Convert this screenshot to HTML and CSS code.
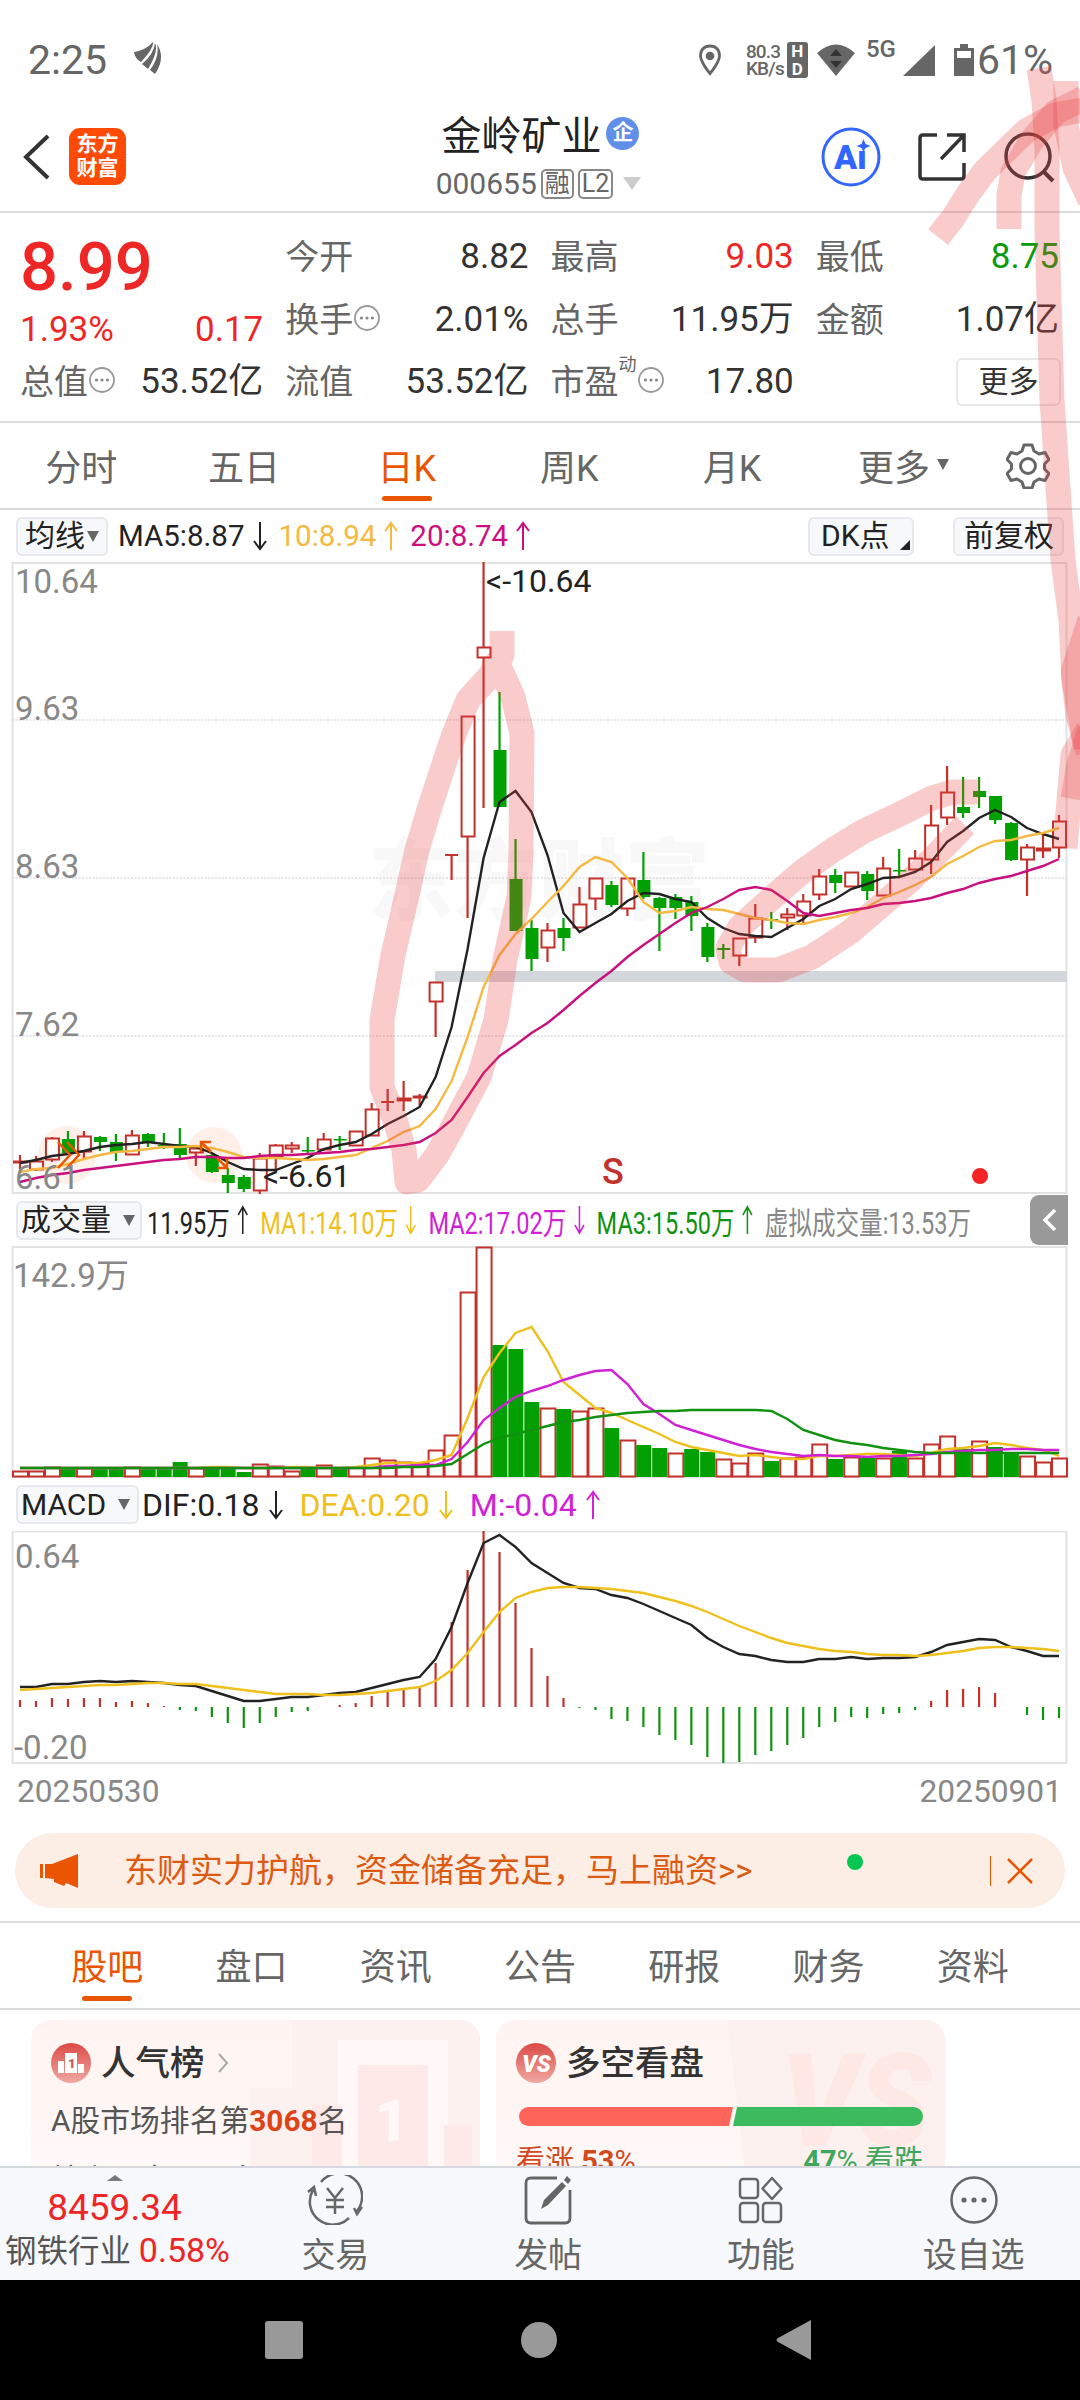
FILE: index.html
```html
<!DOCTYPE html>
<html lang="zh-CN">
<head>
    <meta charset="UTF-8">
    <meta name="viewport" content="width=device-width, initial-scale=1.0">
    <title>金岭矿业 000655</title>
    <link rel="stylesheet" href="styles.css">
</head>
<body>
    <!-- shared icons -->
    <svg class="defs" width="0" height="0">
        <symbol id="up" viewBox="0 0 14 30"><path d="M7 29V2M1 10L7 2l6 8" fill="none" stroke="currentColor" stroke-width="2"/></symbol>
        <symbol id="down" viewBox="0 0 14 30"><path d="M7 1v27M1 20l6 8 6-8" fill="none" stroke="currentColor" stroke-width="2"/></symbol>
        <symbol id="dots" viewBox="0 0 28 28"><circle cx="14" cy="14" r="12" fill="none" stroke="#999" stroke-width="1.8"/><g fill="#888"><circle cx="8.5" cy="14" r="1.6"/><circle cx="14" cy="14" r="1.6"/><circle cx="19.5" cy="14" r="1.6"/></g></symbol>
    </svg>

    <div class="screen">
        <div class="status-bar">
            <span class="clock">2:25</span>
            <svg class="leaf" width="28" height="32" viewBox="0 0 28 32"><path d="M0 10Q12 8 19 0Q20 6 7 20Q1 17 0 10zM8 22Q20 12 21 1Q25 9 14 27zM16 28Q26 14 23 2Q32 16 21 32z" fill="#666"/></svg>
            <div class="status-right">
                <svg class="pin" width="24" height="32" viewBox="0 0 24 32"><path d="M12 2C6 2 2.500 6 2.500 11.500c0 7 9.500 18 9.500 18s9.500-11 9.500-18C21.500 6 18 2 12 2z" fill="none" stroke="#666" stroke-width="2.800"/><circle cx="12" cy="12" r="4.300" fill="#666"/></svg>
                <span class="speed">80.3<br>KB/s</span>
                <span class="hd"><b>H</b><b>D</b></span>
                <svg class="wifi" width="38" height="32" viewBox="0 0 38 32"><path d="M0 9Q19-8 38 9L19 32z" fill="#666"/><path d="M13 12l6-7 6 7zM13 17h12l-6 7z" fill="#333"/></svg>
                <span class="net">5G</span>
                <svg class="signal" width="32" height="31" viewBox="0 0 32 31"><path d="M32 0v31H0z" fill="#666"/></svg>
                <svg class="battery" width="20" height="32" viewBox="0 0 20 32"><path d="M6 0h8v4h6v28H0V4h6z" fill="#666"/><path d="M3 7h14v7H3z" fill="#fff"/></svg>
                <span class="clock">61%</span>
            </div>
        </div>

        <div class="header">
            <div class="header-left">
                <svg width="28" height="46" viewBox="0 0 28 46"><path d="M26 2L4 23l22 21" fill="none" stroke="#333" stroke-width="4"/></svg>
                <div class="logo">东方<br>财富</div>
            </div>
            <div class="stock">
                <div class="stock-name">金岭矿业<span class="badge">企</span></div>
                <div class="stock-code">000655<span class="tag">融</span><span class="tag">L2</span><i class="tri-light"></i></div>
            </div>
            <div class="header-right">
                <svg width="60" height="60" viewBox="0 0 60 60"><circle cx="30" cy="30" r="28" fill="none" stroke="#3366ff" stroke-width="3"/><text x="13" y="42" class="ai">Ai</text><circle cx="42" cy="17" r="6" fill="#fff"/><path d="M42.500 12l2 5 5 2-5 2-2 4-2-4-5-2 5-2z" fill="#3366ff"/></svg>
                <svg width="50" height="50" viewBox="0 0 50 50"><path d="M20 3H6Q3 3 3 6v38q0 3 3 3h38q3 0 3-3V31M30 3h17v17M47 3L24 27" fill="none" stroke="#333" stroke-width="3.500"/></svg>
                <svg width="52" height="52" viewBox="0 0 52 52"><circle cx="25" cy="25" r="22" fill="none" stroke="#333" stroke-width="3.500"/><path d="M40 40l10 10" stroke="#333" stroke-width="4"/></svg>
            </div>
        </div>

        <div class="quote">
            <div class="col">
                <div class="price red">8.99</div>
                <div class="cell cell-short red"><span>1.93%</span><span>0.17</span></div>
                <div class="cell"><label>总值<svg class="info"><use href="#dots"/></svg></label><span>53.52亿</span></div>
            </div>
            <div class="col">
                <div class="cell"><label>今开</label><span>8.82</span></div>
                <div class="cell"><label>换手<svg class="info"><use href="#dots"/></svg></label><span>2.01%</span></div>
                <div class="cell"><label>流值</label><span>53.52亿</span></div>
            </div>
            <div class="col">
                <div class="cell"><label>最高</label><span class="red">9.03</span></div>
                <div class="cell"><label>总手</label><span>11.95万</span></div>
                <div class="cell"><label>市盈<sup>动</sup><svg class="info"><use href="#dots"/></svg></label><span>17.80</span></div>
            </div>
            <div class="col">
                <div class="cell"><label>最低</label><span class="green">8.75</span></div>
                <div class="cell"><label>金额</label><span>1.07亿</span></div>
                <div class="cell cell-end"><button class="more">更多</button></div>
            </div>
        </div>

        <div class="period">
            <span>分时</span><span>五日</span><span class="active">日K</span><span>周K</span><span>月K</span><span class="period-more">更多<i class="tri"></i></span>
            <svg class="gear" width="44" height="46" viewBox="0 0 44 46"><path d="M18 2h8l2 6 5 3 6-1.500 4 7-4.500 4.500v5l4.500 4.500-4 7-6-1.500-5 3-2 6h-8l-2-6-5-3-6 1.500-4-7L5.500 26v-5L1 16.500l4-7L11 11l5-3z" fill="none" stroke="#666" stroke-width="3" stroke-linejoin="round"/><circle cx="22" cy="23" r="7.500" fill="none" stroke="#666" stroke-width="3"/></svg>
        </div>

        <div class="ma-row">
            <span class="chip chip-ma">均线<i class="tri"></i></span>
            <span class="ind">MA5:8.87<svg class="arrow"><use href="#down"/></svg></span>
            <span class="ind c-ma10">10:8.94<svg class="arrow"><use href="#up"/></svg></span>
            <span class="ind c-ma20">20:8.74<svg class="arrow"><use href="#up"/></svg></span>
            <span class="chip chip-dk">DK点<i class="corner"></i></span>
            <span class="chip chip-fq">前复权</span>
        </div>
        <svg class="chart" id="kline" width="1080" height="632" viewBox="0 562 1080 632"></svg>

        <div class="vol-row">
            <span class="chip chip-vol">成交量<i class="tri"></i></span>
            <div class="squeeze">
                <span>11.95万<svg class="arrow"><use href="#up"/></svg></span>
                <span class="c-yellow">MA1:14.10万<svg class="arrow"><use href="#down"/></svg></span>
                <span class="c-purple">MA2:17.02万<svg class="arrow"><use href="#down"/></svg></span>
                <span class="c-green">MA3:15.50万<svg class="arrow"><use href="#up"/></svg></span>
                <span class="c-grey">虚拟成交量:13.53万</span>
            </div>
            <span class="slide"><svg width="16" height="26" viewBox="0 0 16 26"><path d="M14 3L4 13l10 10" fill="none" stroke="#fff" stroke-width="3.500"/></svg></span>
        </div>
        <svg class="chart" id="volume" width="1080" height="232" viewBox="0 1246 1080 232"></svg>

        <div class="macd-row">
            <span class="chip chip-macd">MACD<i class="tri"></i></span>
            <span class="ind">DIF:0.18<svg class="arrow"><use href="#down"/></svg></span>
            <span class="ind c-yellow">DEA:0.20<svg class="arrow"><use href="#down"/></svg></span>
            <span class="ind c-purple">M:-0.04<svg class="arrow"><use href="#up"/></svg></span>
        </div>
        <svg class="chart" id="macd" width="1080" height="233" viewBox="0 1531 1080 233"></svg>
        <div class="dates"><span>20250530</span><span>20250901</span></div>

        <div class="banner">
            <svg class="horn" width="39" height="34" viewBox="0 0 39 34"><path d="M0 10h3v14H0zM5 10h7L38 0v34l-12-5-2 3-10-4v-3l-9-1z" fill="#ea5504"/></svg>
            <span class="banner-text">东财实力护航，资金储备充足，马上融资&gt;&gt;</span>
            <i class="dot"></i>
            <i class="bar"></i>
            <svg width="26" height="26" viewBox="0 0 26 26"><path d="M1 1l24 24M25 1L1 25" stroke="#ea5504" stroke-width="2.500"/></svg>
        </div>

        <div class="tabs">
            <span class="active">股吧</span><span>盘口</span><span>资讯</span><span>公告</span><span>研报</span><span>财务</span><span>资料</span>
        </div>

        <div class="cards">
            <div class="card">
                <svg class="card-bg" width="260" height="150" viewBox="0 0 260 150"><path d="M72 0h188v150H30V68h42z" fill="#fdf1f0"/><path d="M118 20h110v130H118z" fill="#fff8f6"/><path d="M138 45h70v105h-70zM92 85h30v65H92zM224 105h28v45h-28z" fill="#fde9e7"/><text x="154" y="121" class="bg-num">1</text></svg>
                <div class="card-title">
                    <svg width="40" height="40" viewBox="0 0 40 40"><circle cx="20" cy="20" r="20" fill="url(#badgeRed)"/><path d="M7 18h6v12H7zM14 10h12v20H14zM27 21h6v9h-6z" fill="#fff"/><text x="17" y="25" class="rank-num">1</text></svg>
                    人气榜
                    <svg class="chev" width="12" height="20" viewBox="0 0 12 20"><path d="M2 1l8 9-8 9" fill="none" stroke="#aaa" stroke-width="2"/></svg>
                </div>
                <div class="card-line">A股市场排名第<b>3068</b>名</div>
                <div class="card-line card-line2">较上一交易日名</div>
            </div>
            <div class="card">
                <svg class="card-bg" width="260" height="150" viewBox="0 0 260 150"><path d="M42 0h200q18 0 18 18v132H60z" fill="#fdf1f0"/><text x="96" y="126" class="bg-vs" textLength="150" lengthAdjust="spacingAndGlyphs">VS</text></svg>
                <div class="card-title">
                    <svg width="40" height="40" viewBox="0 0 40 40"><defs><linearGradient id="badgeRed" x1="0" y1="0" x2="0" y2="1"><stop offset="0" stop-color="#dc4a45"/><stop offset="1" stop-color="#f0a8a2"/></linearGradient></defs><circle cx="20" cy="20" r="20" fill="url(#badgeRed)"/><text x="6" y="29" class="vs">VS</text></svg>
                    多空看盘
                </div>
                <svg class="ratio" width="404" height="19" viewBox="0 0 404 19"><path d="M9.500 0H214l-4 19H9.500a9.500 9.500 0 0 1 0-19z" fill="#ff6459"/><path d="M218 0h176.500a9.500 9.500 0 0 1 0 19H214z" fill="#3cba5e"/></svg>
                <div class="votes"><span class="up">看涨 <b>53</b>%</span><span class="down"><b>47</b>% 看跌</span></div>
            </div>
        </div>

        <div class="toolbar">
            <div class="index">
                <i class="caret"></i>
                <span class="index-value">8459.34</span>
                <span class="index-name">钢铁行业 <em>0.58%</em></span>
            </div>
            <div class="tool">
                <svg width="56" height="50" viewBox="0 0 56 50"><g fill="none" stroke="#666" stroke-width="2.500"><path d="M14 7a23 23 0 0 1 36 29M42 43A23 23 0 0 1 6 15M1 17l6-5 2 9M47 33l3 6 5-7M20 13l8 10 8-10M28 23v16M19 25h18M19 32h18"/></g></svg>
                交易
            </div>
            <div class="tool">
                <svg width="50" height="50" viewBox="0 0 50 50"><path d="M34 3H8Q3 3 3 8v35q0 5 5 5h34q5 0 5-5V15" fill="none" stroke="#666" stroke-width="2.800"/><path d="M18 34l3-9L39 7l4 4-18 19zM41 5l3-4 4 4-3 4z" fill="#666"/></svg>
                发帖
            </div>
            <div class="tool">
                <svg width="46" height="50" viewBox="0 0 46 50"><g fill="none" stroke="#666" stroke-width="2.500"><rect x="2" y="4" width="18" height="19" rx="3"/><rect x="2" y="28" width="18" height="19" rx="3"/><rect x="25" y="28" width="18" height="19" rx="3"/><path d="M34 3l9.500 10.500L34 24l-9.500-10.500z" stroke-linejoin="round"/></g></svg>
                功能
            </div>
            <div class="tool">
                <svg width="50" height="50" viewBox="0 0 50 50"><circle cx="25" cy="25" r="22.500" fill="none" stroke="#666" stroke-width="2.500"/><g fill="#666"><circle cx="15" cy="25" r="2.600"/><circle cx="25" cy="25" r="2.600"/><circle cx="35" cy="25" r="2.600"/></g></svg>
                设自选
            </div>
        </div>

        <div class="nav-bar">
            <svg width="38" height="38"><rect width="38" height="38" rx="3" fill="#999"/></svg>
            <svg width="38" height="38"><circle cx="19" cy="19" r="18" fill="#999"/></svg>
            <svg width="38" height="42" viewBox="0 0 38 42"><path d="M36 1v40L3 23q-3-2 0-4z" fill="#999"/></svg>
        </div>

        <!-- hand drawn marker strokes over the page -->
        <svg class="marker" width="1080" height="2400" viewBox="0 0 1080 2400">
            <path d="M502 631V655L489 677L468 700L453 737L443 767L428 813L417 850L407 895L393 955L382 1020V1087L396 1123L404 1150L407 1182L418 1180L437 1155L451 1130L479 1077L496 1020L505 960L519 897L521 853L522 733L513 697L500 668"/>
            <path d="M979 792H953L932 798L898 815L864 831L833 850L802 872L774 896L740 927L728 948L731 962L745 970H778L812 957L850 932L884 903L912 879L943 848L965 825"/>
            <path d="M1039 68L1044 100L1047 150V230L1052 400L1063 560L1071 620L1074 680L1079 707L1086 748"/>
            <path d="M938 237L953 218L968 194L985 171L1026 131L1055 115L1084 110"/>
            <path d="M1009 229V195L1013 172L1032 140L1056 112L1084 98"/>
            <path d="M1066 81V125L1075 168L1090 200"/>
            <path d="M1090 620L1073 672L1078 715L1088 752"/>
            <path d="M1065 848L1069 800L1073 755L1088 730"/>
            <path d="M1073 799L1079 765L1090 730"/>
        </svg>
    </div>
    <script src="chart.js"></script>
</body>
</html>
```

FILE: styles.css
```css
* {
    box-sizing: border-box;
    margin: 0;
    padding: 0;
}
body {
    width: 1080px;
    background: #fff;
    color: #333;
    font-family: Roboto, "Noto Sans CJK SC", sans-serif;
}
svg {
    display: block;
    flex-shrink: 0;
}
i, em {
    font-style: normal;
}
.defs {
    position: absolute;
}
.screen {
    position: relative;
    width: 1080px;
    height: 2400px;
    overflow: hidden;
}
.red {
    color: #ee2626;
}
.green {
    color: #0a9b0a;
}

/* status bar */
.status-bar {
    display: flex;
    align-items: center;
    height: 86px;
    padding: 34px 27px 0 28px;
    color: #666;
}
.clock {
    font-size: 41px;
    line-height: 52px;
}
.leaf {
    margin-left: 27px;
    margin-top: -4px;
}
.status-right {
    display: flex;
    align-items: center;
    margin-left: auto;
}
.speed {
    width: 36px;
    margin-left: 24px;
    font-size: 19px;
    line-height: 17px;
    font-weight: 500;
    letter-spacing: -0.8px;
}
.hd {
    display: flex;
    flex-direction: column;
    align-items: center;
    width: 21px;
    height: 36px;
    margin: 0 9px 0 5px;
    border-radius: 3px;
    background: #666;
    color: #fff;
    font-size: 17px;
    line-height: 18px;
}
.net {
    margin: -22px 0 0 11px;
    font-size: 24px;
    line-height: 30px;
    font-weight: 500;
}
.signal {
    margin: 0 19px 0 7px;
}
.battery {
    margin-right: 3px;
}

/* header */
.header {
    display: flex;
    align-items: center;
    justify-content: space-between;
    height: 127px;
    padding: 16px 25px 0 22px;
    border-bottom: 2px solid #dcdcdc;
}
.header-left, .header-right {
    display: flex;
    align-items: center;
    width: 240px;
}
.header-right {
    justify-content: flex-end;
    gap: 36px;
}
.logo {
    width: 57px;
    height: 57px;
    margin-left: 19px;
    padding-top: 4px;
    border-radius: 11px;
    background: #ff4a05;
    color: #fff;
    font-size: 21px;
    line-height: 24px;
    font-weight: 700;
    text-align: center;
}
.stock {
    margin-top: 1px;
}
.stock-name, .stock-code {
    display: flex;
    align-items: center;
    justify-content: center;
}
.stock-name {
    height: 53px;
    padding-left: 4px;
    font-size: 40px;
    color: #222;
}
.badge {
    width: 33px;
    height: 33px;
    margin-left: 5px;
    border-radius: 50%;
    background: #5f8fe8;
    color: #fff;
    font-size: 21px;
    line-height: 31px;
    font-weight: 700;
    text-align: center;
}
.stock-code {
    height: 48px;
    font-size: 30px;
    color: #666;
}
.tag {
    height: 30px;
    margin-left: 4px;
    padding: 0 2px;
    border: 2px solid #888;
    border-radius: 5px;
    font-size: 25px;
    line-height: 26px;
}
.tri-light {
    margin-left: 10px;
    border: 9px solid transparent;
    border-top: 13px solid #ccc;
    border-bottom: 0;
}
.ai {
    font-size: 34px;
    font-weight: 900;
    fill: #3366ff;
}

/* quote */
.quote {
    display: grid;
    grid-template-columns: repeat(4, 1fr);
    column-gap: 22px;
    height: 210px;
    padding: 13px 21px 0 20px;
    border-bottom: 2px solid #dcdcdc;
}
.price {
    height: 82px;
    font-size: 67px;
    line-height: 82px;
    font-weight: 500;
}
.cell {
    display: flex;
    align-items: center;
    justify-content: space-between;
    height: 62.5px;
    font-size: 35px;
    line-height: 44px;
}
.cell-short {
    height: 43px;
}
.cell-end {
    justify-content: flex-end;
}
.cell label {
    display: flex;
    align-items: center;
    color: #666;
    font-size: 34px;
}
.cell sup {
    margin-top: -34px;
    font-size: 18px;
    line-height: 20px;
}
.info {
    width: 28px;
    height: 28px;
    margin-top: -4px;
}
.more {
    width: 105px;
    height: 48px;
    margin-right: -2px;
    border: 2px solid #e8e8e8;
    border-radius: 6px;
    background: #fff;
    color: #333;
    font-family: inherit;
    font-size: 30px;
    line-height: 40px;
}

/* period tabs */
.period {
    display: flex;
    align-items: center;
    height: 87px;
    border-bottom: 2px solid #dcdcdc;
    color: #666;
    font-size: 36px;
}
.period span {
    display: flex;
    justify-content: center;
    align-items: center;
    width: 162.7px;
    height: 85px;
    padding-bottom: 2px;
}
.period .period-more {
    width: 180px;
}
.period .active, .tabs .active {
    position: relative;
    color: #ea5504;
}
.period .active::after, .tabs .active::after {
    content: "";
    position: absolute;
    left: 50%;
    bottom: 7px;
    width: 50px;
    height: 5px;
    margin-left: -25px;
    border-radius: 3px;
    background: #ea5504;
}
.tri {
    margin-left: 7px;
    border: 6px solid transparent;
    border-top: 11px solid #666;
    border-bottom: 0;
}
.gear {
    margin-left: 13px;
}

/* indicator rows */
.ma-row, .vol-row, .macd-row {
    display: flex;
    align-items: center;
    padding-left: 16px;
}
.ma-row {
    height: 52px;
}
.vol-row {
    height: 52px;
}
.macd-row {
    height: 53px;
}
.chip {
    display: flex;
    align-items: center;
    height: 39px;
    padding-left: 7px;
    border: 2px solid #e6e8ec;
    border-radius: 6px;
    background: #f7f8fa;
    color: #222;
    font-size: 30px;
    line-height: 34px;
}
.chip .tri {
    margin-left: 2px;
}
.chip-ma {
    width: 92px;
    margin-right: 10px;
}
.chip-vol {
    width: 126px;
    padding-left: 3px;
}
.chip-vol .tri, .chip-macd .tri {
    margin-left: 12px;
}
.chip-macd {
    width: 123px;
    padding-left: 3px;
    margin-right: 3px;
}
.chip-dk {
    width: 106px;
    margin-left: auto;
    padding-left: 11px;
}
.chip-fq {
    width: 111px;
    margin: 0 16px 0 39px;
    padding-left: 9px;
}
.corner {
    margin: 18px 0 0 10px;
    border-left: 10px solid transparent;
    border-bottom: 10px solid #222;
}
.ind {
    display: flex;
    align-items: center;
    color: #222;
}
.ma-row .ind {
    margin-right: 12px;
    font-size: 29.5px;
}
.ma-row .arrow {
    margin-left: 8px;
}
.macd-row .ind {
    margin-right: 17px;
    font-size: 32px;
}
.arrow {
    width: 14px;
    height: 30px;
    margin-left: 9px;
}
.ind.c-ma10 {
    color: #f5b942;
}
.ind.c-ma20 {
    color: #cc0f7f;
}
.c-yellow, .ind.c-yellow {
    color: #efc01c;
}
.c-purple, .ind.c-purple {
    color: #d021d6;
}
.c-green {
    color: #0f920f;
}
.c-grey {
    color: #888;
}
.squeeze {
    display: flex;
    width: 880px;
    margin-left: 5px;
    gap: 15px;
    color: #222;
    font-size: 31px;
    white-space: nowrap;
    transform: scaleX(0.76);
    transform-origin: left center;
}
.squeeze span {
    display: flex;
    align-items: center;
}
.squeeze .arrow {
    width: 16px;
    margin-left: 9px;
}
.slide {
    display: flex;
    align-items: center;
    justify-content: center;
    width: 38px;
    height: 50px;
    margin-left: 3px;
    border-radius: 9px 0 0 9px;
    background: #999;
}

/* charts */
.chart text {
    fill: #888;
    font-size: 33px;
}
.chart .note {
    fill: #222;
    font-size: 32px;
}
.chart .sell {
    fill: #c4302b;
    font-size: 36px;
    font-weight: 500;
}
.chart .watermark {
    fill: #f8f8f8;
    font-size: 88px;
    font-weight: 900;
}
.dates {
    display: flex;
    justify-content: space-between;
    height: 54px;
    padding: 0 18px 0 17px;
    color: #888;
    font-size: 31.7px;
    line-height: 55px;
}

/* banner */
.banner {
    display: flex;
    align-items: center;
    height: 75px;
    margin: 15px 15px 13px;
    padding: 0 32px 0 25px;
    border-radius: 38px;
    background: #fdeee5;
}
.banner-text {
    margin-left: 45px;
    color: #dc5a12;
    font-size: 33px;
    line-height: 44px;
}
.dot {
    width: 16px;
    height: 16px;
    margin: -18px 0 0 auto;
    border-radius: 50%;
    background: #04c650;
}
.bar {
    width: 1px;
    height: 30px;
    margin: 0 16px 0 127px;
    background: #ea5504;
}

/* tabs */
.tabs {
    display: flex;
    height: 89px;
    padding: 0 35px;
    border-top: 2px solid #dcdcdc;
    border-bottom: 2px solid #dcdcdc;
    color: #666;
    font-size: 36px;
    line-height: 91px;
}
.tabs span {
    flex: 1;
    height: 85px;
    text-align: center;
}

/* cards */
.cards {
    display: flex;
    gap: 16px;
    height: 156px;
    padding: 10px 31px 0;
    overflow: hidden;
}
.card {
    position: relative;
    width: 449px;
    height: 220px;
    padding: 17px 20px;
    border-radius: 20px;
    background: linear-gradient(#fff4f2, #fffaf8);
    overflow: hidden;
}
.card-bg {
    position: absolute;
    right: 0;
    top: 0;
}
.card-title {
    position: relative;
    display: flex;
    align-items: center;
    gap: 10px;
    height: 52px;
    font-size: 34.5px;
    line-height: 40px;
    font-weight: 500;
}
.card-line {
    position: relative;
    margin-top: 10px;
    color: #555;
    font-size: 29.8px;
    line-height: 44px;
}
.card-line b {
    color: #dc4417;
    font-weight: 700;
}
.card-line2 {
    margin-top: 15px;
}
.chev {
    margin-left: 2px;
}
.bg-num {
    fill: #fff8f6;
    font-size: 60px;
    font-weight: 900;
}
.rank-num {
    fill: #d9534f;
    font-size: 13px;
    font-weight: 900;
}
.vs {
    fill: #fff;
    font-size: 23px;
    font-weight: 900;
    font-style: italic;
}
.bg-vs {
    fill: #fde8e6;
    font-size: 130px;
    font-weight: 900;
    font-style: italic;
}
.ratio {
    position: relative;
    margin: 18px 0 0 3px;
}
.votes {
    position: relative;
    display: flex;
    justify-content: space-between;
    margin-top: 13px;
    padding-right: 2px;
    font-size: 29px;
    line-height: 44px;
}
.votes .up {
    color: #d24a1c;
}
.votes .down {
    color: #3fa75c;
}

/* bottom */
.toolbar {
    display: flex;
    height: 114px;
    border-top: 2px solid #d6d9dd;
    background: #f6f8fb;
    color: #666;
}
.index {
    display: flex;
    flex-direction: column;
    align-items: center;
    width: 229px;
    padding-top: 7px;
}
.caret {
    border: 8px solid transparent;
    border-bottom: 6px solid #777;
    border-top: 0;
}
.index-value {
    margin-top: 6px;
    color: #ee2626;
    font-size: 37px;
    line-height: 42px;
}
.index-name {
    margin-left: 6px;
    color: #555;
    font-size: 31.500px;
    line-height: 42px;
    white-space: nowrap;
}
.index-name em {
    color: #ee2626;
    font-size: 34px;
}
.tool {
    display: flex;
    flex: 1;
    flex-direction: column;
    align-items: center;
    padding-top: 7px;
    font-size: 34px;
    line-height: 60px;
}
.nav-bar {
    display: flex;
    align-items: center;
    justify-content: space-between;
    height: 120px;
    padding: 0 267px 0 265px;
    background: #000;
}

.marker {
    position: absolute;
    left: 0;
    top: 0;
    pointer-events: none;
}
.marker path {
    fill: none;
    stroke: #e94545;
    stroke-width: 25;
    stroke-opacity: 0.28;
    stroke-linejoin: round;
}
```

FILE: chart.js
```js
const RED = '#c4302b';
const GREEN = '#02a002';
const LEFT = 12;
const RIGHT = 1067;
const STEP = (RIGHT - LEFT) / 66;

// [color, high, body top, body bottom, low]
const candles = [
    ['r',1155,1161,1163,1172],['r',1156,1161,1170,1171],['r',1137,1138,1160,1162],['g',1131,1139,1153,1154],
    ['r',1131,1136,1152,1160],['g',1136,1137,1142,1151],['g',1134,1142,1152,1161],['r',1130,1135,1155,1155],
    ['g',1133,1134,1143,1147],['g',1133,1145,1146,1149],['g',1128,1144,1155,1158],['r',1147,1148,1153,1166],
    ['g',1154,1155,1172,1173],['g',1168,1175,1183,1193],['g',1175,1177,1189,1192],['r',1153,1158,1191,1194],
    ['r',1144,1145,1157,1170],['r',1142,1145,1149,1153],['g',1137,1150,1151,1153],['r',1133,1139,1150,1151],
    ['g',1136,1139,1140,1150],['r',1131,1131,1146,1146],['r',1103,1109,1136,1136],['r',1089,1102,1103,1111],
    ['r',1081,1098,1101,1111],['r',1094,1096,1098,1106],['r',982,982,1002,1037],['r',855,855,855,880],
    ['r',716,716,837,918],['r',562,647,658,808],['g',692,750,807,807],['g',839,879,931,931],
    ['g',920,928,959,971],['r',923,930,948,962],['g',918,928,938,951],['r',887,904,928,928],
    ['r',878,878,899,910],['g',881,885,905,907],['r',878,878,909,916],['g',852,880,897,899],
    ['g',897,898,908,951],['g',894,897,908,919],['g',896,902,916,931],['g',923,927,957,962],
    ['g',944,948,950,959],['r',938,938,956,966],['r',904,918,938,943],['g',912,919,920,929],
    ['r',908,914,918,930],['r',894,901,916,924],['r',869,876,895,900],['g',869,875,883,893],
    ['r',872,872,887,887],['g',871,874,891,900],['r',857,868,896,896],['g',849,870,871,877],
    ['r',850,858,870,870],['r',805,825,860,874],['r',766,792,818,825],['g',777,807,813,818],
    ['g',777,791,797,808],['g',796,796,820,824],['g',822,823,860,861],['r',844,847,860,896],
    ['r',833,848,851,858],['r',815,821,848,858]
];
const ma5 = [1163,1160,1156,1154,1151,1147,1145,1144,1142,1144,1146,1147,1153,1162,1169,1170,1170,1164,1158,1149,1145,1142,1134,1124,1116,1107,1077,1027,949,858,802,791,812,855,913,932,923,914,901,893,894,899,902,918,928,934,936,937,928,919,906,899,889,884,878,877,872,862,842,831,818,810,817,828,834,839];
const ma10 = [1172,1169,1168,1164,1159,1155,1152,1151,1149,1147,1147,1146,1148,1152,1157,1158,1158,1159,1160,1159,1157,1155,1148,1141,1132,1126,1109,1081,1037,987,955,934,919,902,886,867,857,862,878,902,913,911,907,909,910,914,918,920,923,924,920,917,913,907,898,892,885,877,864,856,847,841,840,836,833,828];
const ma20 = [1182,1178,1175,1173,1170,1168,1166,1164,1162,1160,1159,1157,1157,1158,1158,1156,1155,1155,1154,1153,1152,1150,1149,1147,1145,1142,1133,1120,1097,1073,1056,1045,1033,1023,1010,996,983,971,957,945,934,923,913,907,899,890,887,890,901,913,916,913,910,908,904,903,901,898,893,889,883,879,876,871,866,859];

const volColor = 'rrrgrggrgggrgggrrrgrgrrrrrrrrrgggrgrrgrggrggrrrgrrrgrgrgrrrgrggrrr';
const vol = [1471,1471,1467,1468,1468,1469,1469,1467,1468,1468,1462,1468,1469,1469,1472,1464,1466,1471,1469,1465,1468,1467,1458,1460,1462,1463,1450,1435,1292,1247,1345,1349,1402,1408,1409,1411,1408,1428,1440,1445,1448,1453,1449,1452,1459,1463,1453,1461,1458,1457,1444,1459,1457,1458,1458,1451,1458,1444,1436,1449,1441,1447,1453,1456,1462,1458];
const flat = (n, y) => new Array(n).fill(y);
const vma1 = [...flat(12, 1468), 1467, 1467, 1468, 1468, 1468, 1467, 1467, 1468, 1468, 1467, 1465,1463,1463,1463,1460,1455,1418,1377,1353,1333,1327,1351,1382,1395,1408,1413,1420,1427,1434,1442,1447,1450,1453,1456,1455,1457,1459,1459,1456,1456,1455,1454,1454,1455,1456,1453,1449,1448,1446,1443,1445,1448,1450,1456];
const vma2 = [...flat(23, 1468), 1466,1466,1465,1465,1459,1442,1420,1408,1397,1391,1386,1380,1375,1371,1370,1384,1404,1414,1425,1430,1435,1440,1445,1449,1452,1454,1456,1455,1456,1456,1457,1456,1456,1455,1454,1452,1451,1450,1450,1449,1449,1450,1450];
const vma3 = [...flat(24, 1468), 1467,1467,1466,1464,1454,1444,1438,1434,1430,1426,1422,1420,1417,1415,1413,1412,1411,1411,1410,1410,1410,1410,1410,1411,1419,1430,1435,1440,1443,1445,1448,1450,1452,1453,1453,1453,1453,1453,1453,1453,1453,1453];

const hist = [1700,1701,1698,1699,1698,1698,1702,1701,1703,1706,1710,1711,1717,1723,1728,1723,1717,1712,1711,1707,1705,1703,1696,1692,1689,1688,1663,1622,1570,1531,1552,1603,1648,1676,1698,1708,1710,1719,1721,1727,1735,1740,1745,1757,1763,1762,1755,1751,1745,1738,1727,1722,1717,1718,1714,1713,1710,1701,1690,1689,1687,1693,1707,1715,1720,1718];
const dif = [1687,1687,1684,1684,1682,1681,1682,1681,1682,1683,1685,1686,1691,1696,1701,1701,1699,1697,1697,1695,1693,1692,1688,1684,1680,1677,1659,1627,1583,1543,1535,1547,1563,1573,1583,1588,1589,1595,1598,1604,1611,1618,1625,1638,1647,1654,1656,1660,1662,1662,1659,1659,1657,1659,1658,1658,1657,1652,1645,1642,1639,1640,1647,1651,1656,1656];
const dea = [1690,1689,1688,1687,1686,1685,1685,1684,1683,1683,1684,1684,1686,1688,1690,1692,1694,1694,1694,1695,1695,1694,1693,1691,1689,1687,1681,1670,1653,1632,1612,1598,1592,1588,1587,1587,1588,1589,1591,1593,1597,1601,1606,1612,1619,1626,1632,1638,1643,1646,1649,1651,1652,1654,1655,1655,1656,1655,1653,1651,1648,1647,1647,1648,1649,1651];

const cx = i => LEFT + STEP * (i + 0.5);

function line(points, color) {
    return `<polyline points="${points.map((y, i) => cx(i).toFixed(1) + ',' + y).join(' ')}" fill="none" stroke="${color}" stroke-width="2.4"/>`;
}

function frame(top, bottom) {
    return `<rect x="12.5" y="${top}" width="1054" height="${bottom - top}" fill="none" stroke="#e2e2e2" stroke-width="2"/>`;
}

function drawKline() {
    let s = '<text class="watermark" x="368" y="912" textLength="342" lengthAdjust="spacingAndGlyphs">东方财富</text>';
    s += frame(563, 1193);
    [720, 878, 1036].forEach(y => {
        s += `<path d="M12 ${y}H1067" stroke="#ddd" stroke-width="1.5" stroke-dasharray="2 1.5"/>`;
    });
    s += '<rect x="435" y="971" width="632" height="11" fill="#d3d6db"/>';
    s += '<circle cx="67" cy="1155" r="29" fill="#fef0e8"/><circle cx="214" cy="1155" r="28" fill="#fef0e8"/>';
    candles.forEach(([c, high, top, bottom, low], i) => {
        const x = cx(i);
        const h = bottom - top;
        if (c === 'g') {
            s += `<path d="M${x} ${high}V${low}" stroke="${GREEN}" stroke-width="2.2"/>`;
            s += `<rect x="${x - 6}" y="${top}" width="13" height="${Math.max(h, 1.5)}" fill="${GREEN}"/>`;
        } else {
            s += `<path d="M${x} ${high}V${top}M${x} ${bottom}V${low}" stroke="${RED}" stroke-width="2.2"/>`;
            s += h < 2
                ? `<path d="M${x - 6.5} ${top}h13" stroke="${RED}" stroke-width="2"/>`
                : `<rect x="${x - 6}" y="${top + 0.5}" width="13" height="${h - 1}" fill="#fff" fill-opacity="0.9" stroke="${RED}" stroke-width="2"/>`;
        }
    });
    s += line(ma5, '#222') + line(ma10, '#f5b942') + line(ma20, '#c9107e');
    // signal icons
    s += '<path d="M58 1142l12 13-12 13M67 1142l12 13-12 13" fill="none" stroke="#ea5504" stroke-width="2.5"/>';
    s += '<path d="M211 1142h-10v10M201 1142l10 10M227 1158v10h-10M227 1168l-10-10" fill="none" stroke="#ea5504" stroke-width="2.5"/>';
    [['10.64', 593], ['9.63', 720], ['8.63', 878], ['7.62', 1036], ['6.61', 1189]].forEach(([t, y]) => {
        s += `<text x="15" y="${y}">${t}</text>`;
    });
    s += '<text class="note" x="486" y="592">&lt;-10.64</text><text class="note" x="263" y="1187">&lt;-6.61</text>';
    s += '<text class="sell" x="602" y="1184">S</text><circle cx="980" cy="1176" r="8" fill="#f22424"/>';
    document.getElementById('kline').innerHTML = s;
}

function drawVolume() {
    let s = frame(1247, 1477);
    vol.forEach((y, i) => {
        const x = LEFT + STEP * i;
        s += volColor[i] === 'g'
            ? `<rect x="${x + 0.8}" y="${y}" width="15" height="${1477 - y}" fill="${GREEN}"/>`
            : `<rect x="${x + 1}" y="${y + 0.5}" width="15" height="${1476 - y}" fill="#fff" stroke="${RED}" stroke-width="2"/>`;
    });
    s += line(vma1, '#efc01c') + line(vma2, '#d021d6') + line(vma3, '#0f920f');
    s += '<text x="13" y="1287">142.9万</text>';
    document.getElementById('volume').innerHTML = s;
}

function drawMacd() {
    let s = frame(1531.5, 1763);
    hist.forEach((y, i) => {
        if (y === 1707) return;
        s += `<path d="M${cx(i)} 1707V${y}" stroke="${y < 1707 ? RED : '#0f920f'}" stroke-width="2.2"/>`;
    });
    s += line(dif, '#222') + line(dea, '#efc01c');
    s += '<text x="15" y="1568">0.64</text><text x="14" y="1759">-0.20</text>';
    document.getElementById('macd').innerHTML = s;
}

drawKline();
drawVolume();
drawMacd();
```
